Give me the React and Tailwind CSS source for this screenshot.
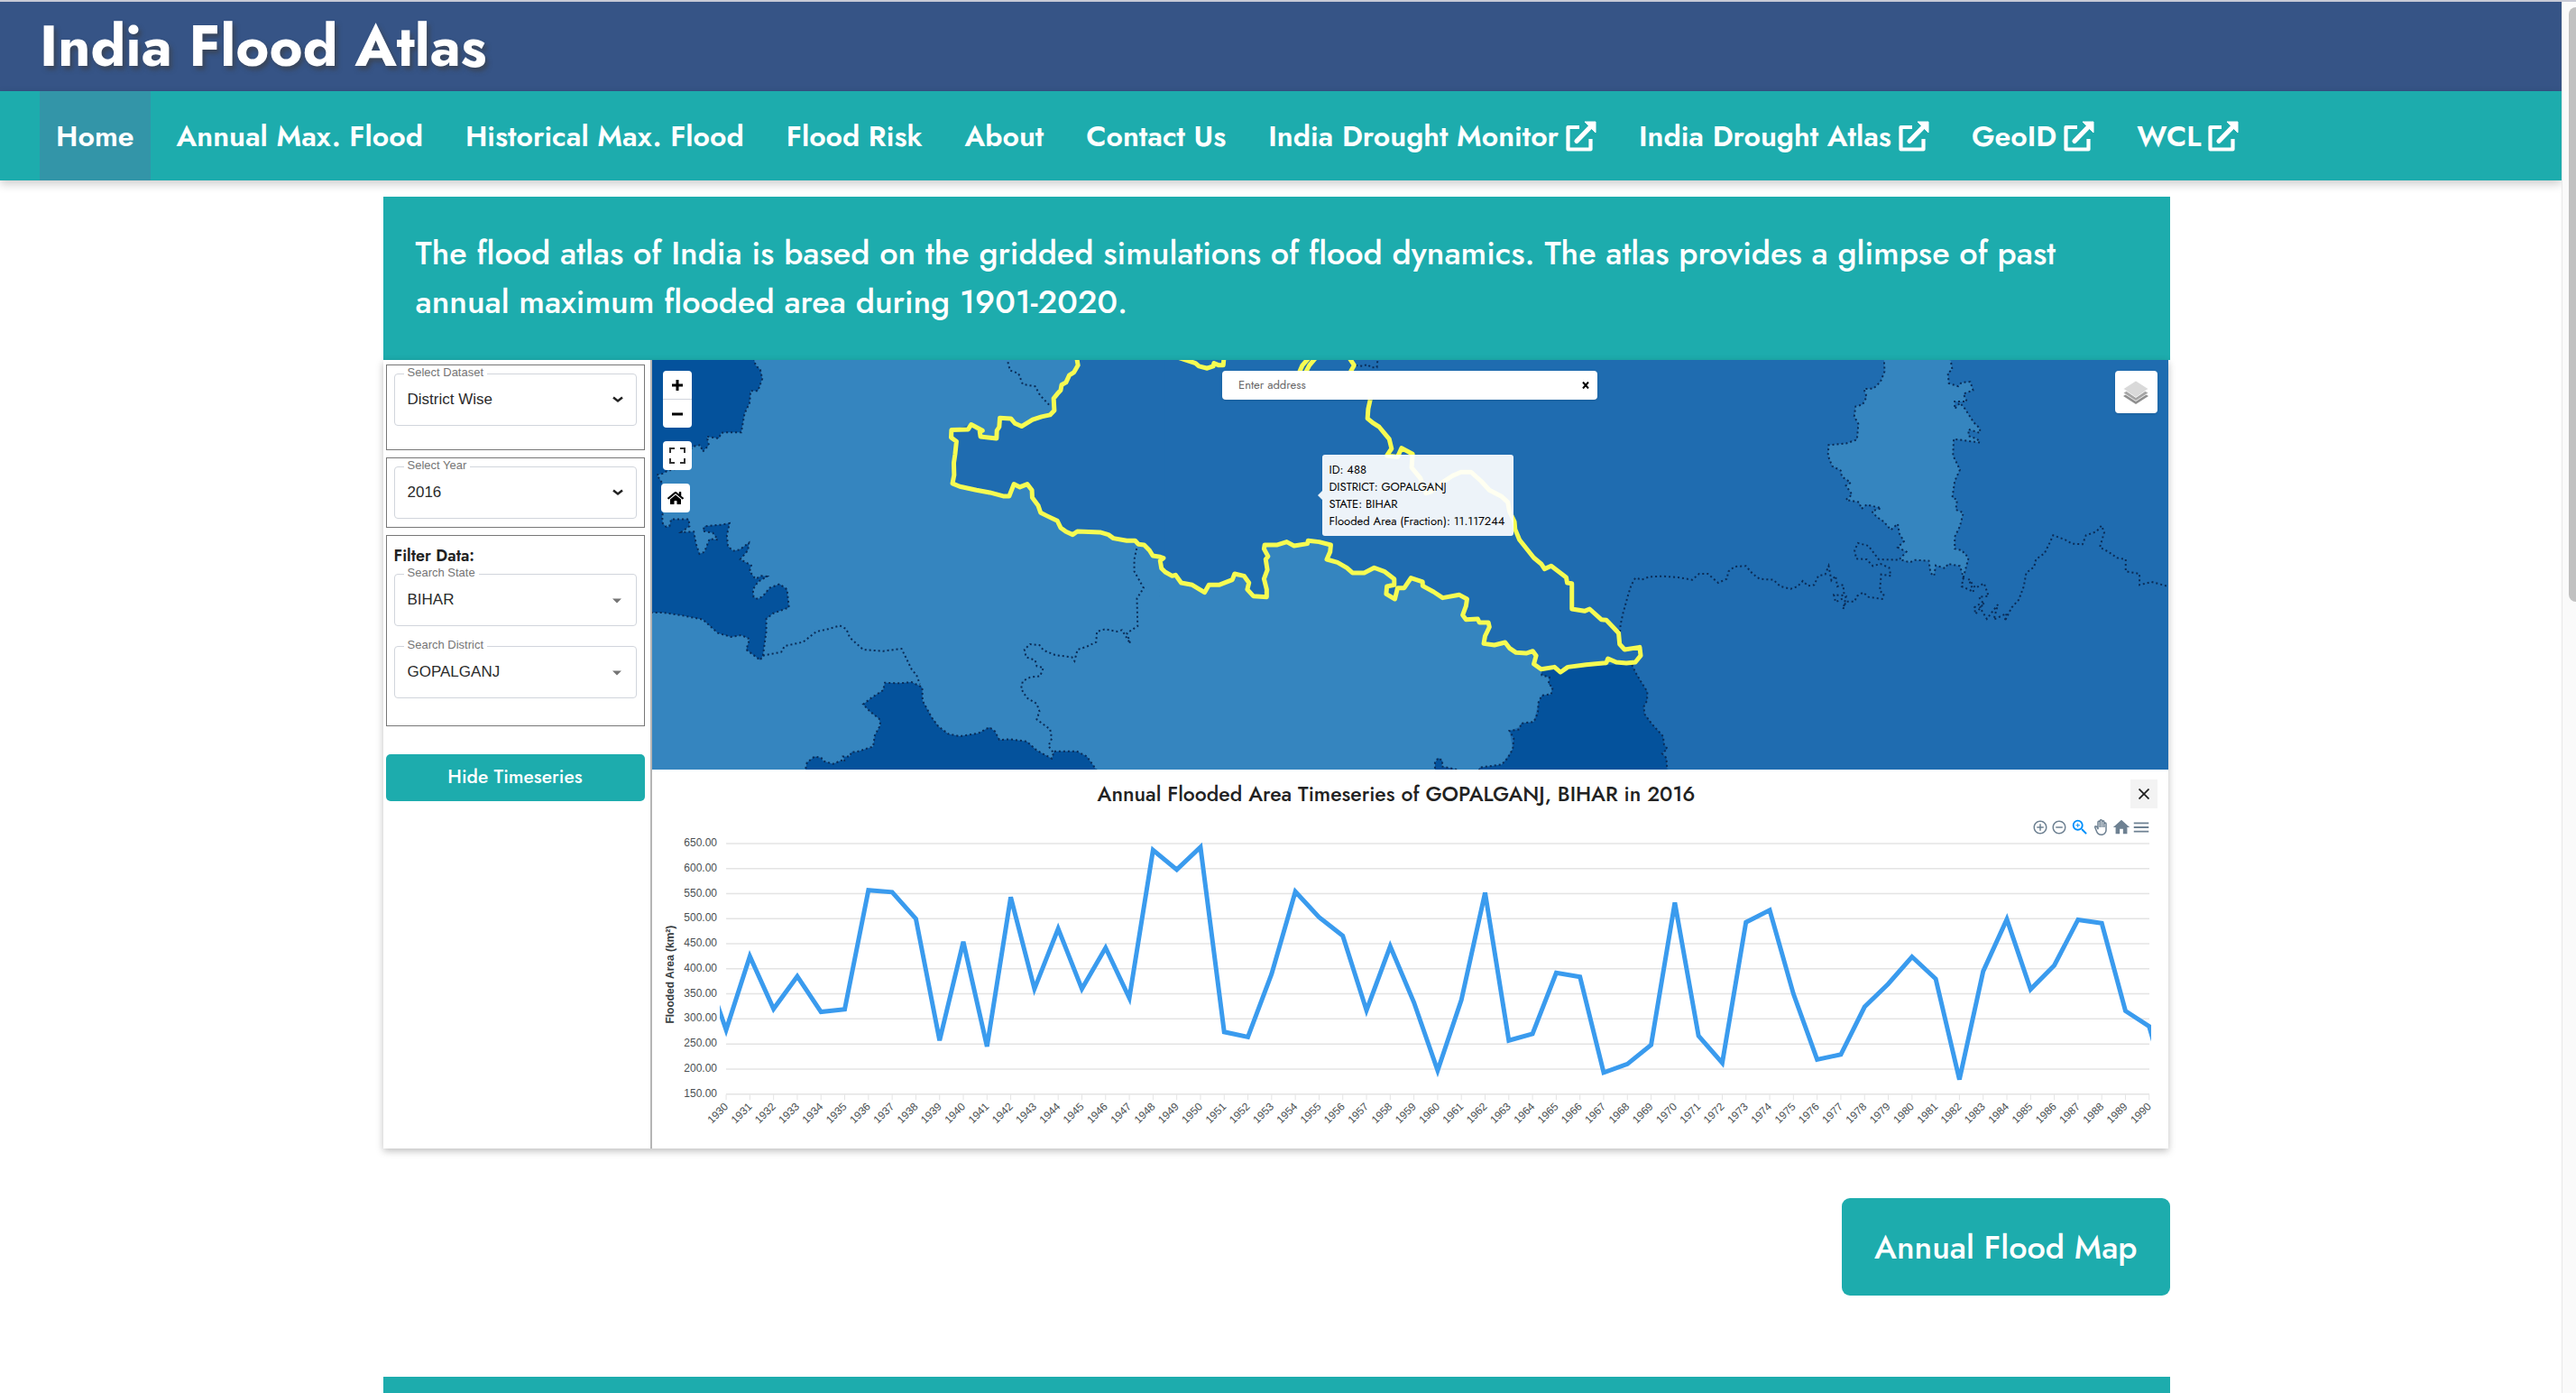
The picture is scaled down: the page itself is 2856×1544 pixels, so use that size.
import { useState } from "react";
import { FaHome } from "react-icons/fa";
import { MdAddCircleOutline, MdRemoveCircleOutline, MdZoomIn, MdOutlineBackHand, MdHome, MdMenu } from "react-icons/md";

const navLinks = [
  { name: "Home", active: true },
  { name: "Annual Max. Flood" },
  { name: "Historical Max. Flood" },
  { name: "Flood Risk" },
  { name: "About" },
  { name: "Contact Us" },
  { name: "India Drought Monitor", external: true },
  { name: "India Drought Atlas", external: true },
  { name: "GeoID", external: true },
  { name: "WCL", external: true },
];

// flooded area (km2) for every year from 1929 to 1991, the first and last are clipped by the plot
const floodedArea = [
  415, 278, 425, 320, 385, 314, 319, 557, 553, 500, 257, 454, 245, 543, 360, 480, 360, 442, 342, 637, 598,
  643, 274, 264, 390, 554, 503, 466, 317, 445, 333, 197, 338, 552, 257, 270, 392, 384, 193, 210, 248,
  532, 266, 212, 493, 517, 350, 219, 229, 324, 370, 424, 380, 179, 395, 499, 359, 407, 498, 491, 316, 285, 120,
];

const years = Array.from({ length: 61 }, (_, i) => 1930 + i);
const ticks = [650, 600, 550, 500, 450, 400, 350, 300, 250, 200, 150];

const ExternalIcon = () => (
  <svg viewBox="0 0 34 34" className="ml-2 size-[34px]" fill="none" stroke="currentColor" strokeWidth="4.200" strokeLinejoin="round" aria-hidden="true">
    <path d="M15 7H2.500V31.500H27.500V20" />
    <path d="M12 22.500L27 7" strokeWidth="5.200" strokeLinecap="round" />
    <path d="M21 1H33V13Z" fill="currentColor" stroke="currentColor" strokeWidth="1" />
  </svg>
);

const Navbar = () => (
  <nav className="flex h-[99px] bg-[#1dacad] px-11 shadow-[0_4px_10px_rgba(0,0,0,0.2)]">
    <ul className="flex gap-[11px]">
      {navLinks.map((link) => (
        <li key={link.name} className="flex">
          <a
            href="#"
            className={`flex items-center px-[18px] text-[32px] font-semibold whitespace-nowrap text-white ${link.active ? "bg-[#3395a8]" : ""}`}
          >
            {link.name}
            {link.external && <ExternalIcon />}
          </a>
        </li>
      ))}
    </ul>
  </nav>
);

const Field = ({ id, label, children }) => (
  <div className="relative h-[58px] rounded border border-gray-300">
    <label htmlFor={id} className="absolute -top-2 left-2.5 bg-white px-1 font-[Liberation_Sans,sans-serif] text-[13px] leading-3 text-[#757575]">
      {label}
    </label>
    {children}
  </div>
);

const SelectField = ({ id, label, value }) => (
  <Field id={id} label={label}>
    <select id={id} className="h-full w-full appearance-none bg-transparent px-3.5 font-[Liberation_Sans,sans-serif] text-[17px] text-[#2b2b2b]">
      <option>{value}</option>
    </select>
    <svg viewBox="0 0 12 8" className="pointer-events-none absolute top-6 right-3.5 h-2 w-3" fill="none" stroke="#222" strokeWidth="2.500" aria-hidden="true">
      <path d="M1 1.500L6 5.500L11 1.500" />
    </svg>
  </Field>
);

const SearchField = ({ id, label, value }) => {
  const [text, setText] = useState(value);
  return (
    <Field id={id} label={label}>
      <input
        id={id}
        value={text}
        onChange={(e) => setText(e.target.value)}
        className="h-full w-full bg-transparent px-3.5 font-[Liberation_Sans,sans-serif] text-[17px] text-[#2b2b2b]"
      />
      <svg viewBox="0 0 10 6" className="pointer-events-none absolute top-[26px] right-4 h-1.5 w-2.5" fill="#757575" aria-hidden="true">
        <path d="M0 0.500H10L5 5.500Z" />
      </svg>
    </Field>
  );
};

const Sidebar = ({ open, onToggle }) => (
  <aside className="w-[298px] shrink-0 border-r-2 border-[#b5b5b5] pt-[5px] pr-1.5 pl-[3px]">
    <div className="h-[95px] border border-[#777] px-2 pt-[9px]">
      <SelectField id="dataset" label="Select Dataset" value="District Wise" />
    </div>
    <div className="mt-2 h-[78px] border border-[#777] px-2 pt-[9px]">
      <SelectField id="year" label="Select Year" value="2016" />
    </div>
    <div className="mt-2 h-[212px] border border-[#777] px-2 pt-2">
      <p className="h-[34px] text-lg font-semibold text-[#222]">Filter Data:</p>
      <div className="flex flex-col gap-[22px]">
        <SearchField id="state" label="Search State" value="BIHAR" />
        <SearchField id="district" label="Search District" value="GOPALGANJ" />
      </div>
    </div>
    <button onClick={onToggle} className="mt-[31px] h-[52px] w-full rounded-[5px] bg-[#1dacad] text-[21px] font-medium text-white">
      {open ? "Hide Timeseries" : "Show Timeseries"}
    </button>
  </aside>
);

const Outline = ({ points, fill = "none" }) => (
  <polyline points={points} fill={fill} stroke="#0a2c57" strokeWidth="2" strokeDasharray="2 3" vectorEffect="non-scaling-stroke" />
);

const Selected = ({ points, fill = "none" }) => (
  <polyline points={points} fill={fill} stroke="#f6fb52" strokeWidth="5" strokeLinejoin="round" vectorEffect="non-scaling-stroke" />
);

const light = "#3585bf";
const mid = "#1f6cb0";
const dark = "#04529c";

// the districts are drawn in three sheets, west to east, each with its own grid
const DistrictMap = () => (
  <svg viewBox="0 0 1680 454" preserveAspectRatio="xMidYMid slice" className="block h-full w-full" role="img" aria-label="District map">
    <rect width="1680" height="454" fill={mid} />
    <g transform="translate(-3 -9) scale(0.37 0.3333)">
      <rect width="1541" height="1400" fill={light} />
      <polygon
        fill={mid}
        points="1280,20 1284,45 1248,102 1211,155 1213,195 1200,210 1115,248 1083,222 1050,220 1040,288 992,282 964,242 905,260 920,298 908,438 980,460 1078,480 1092,440 1132,440 1147,485 1172,535 1222,562 1248,598 1268,608 1282,597 1350,600 1390,620 1455,628 1498,660 1530,695 1534,720 1545,732 1545,20"
      />
      <Outline
        fill={dark}
        points="-10,20 312,20 318,45 332,60 338,90 325,130 303,130 300,170 285,205 275,268 230,268 215,270 208,288 172,282 178,310 160,332 152,310 130,315 80,390 55,395 40,405 22,410 32,425 60,480 38,545 40,570 50,582 60,580 65,557 118,557 120,580 95,600 133,598 140,640 150,672 165,665 180,622 205,625 190,602 160,596 165,580 215,575 240,570 232,610 235,645 250,662 270,658 298,635 295,660 272,690 305,710 300,730 318,755 335,745 352,747 325,765 310,790 312,815 325,822 340,812 360,785 390,772 412,790 418,850 370,870 350,888 350,930 345,970 340,1010 332,1025 290,990 300,955 275,942 245,948 205,935 160,890 100,877 40,867 -10,867"
      />
      <Outline
        fill={dark}
        points="465,1400 472,1365 495,1345 515,1350 520,1360 550,1370 575,1358 585,1362 580,1345 600,1345 605,1330 620,1330 670,1312 675,1275 692,1240 688,1220 660,1195 640,1172 665,1150 700,1125 705,1100 750,1102 785,1098 817,1115 818,1160 838,1200 845,1215 865,1245 895,1270 930,1278 985,1268 1018,1248 1035,1262 1048,1290 1080,1288 1130,1295 1160,1325 1205,1352 1212,1328 1280,1328 1310,1345 1345,1400"
      />
      <Outline points="340,1010 395,998 405,978 460,965 500,930 535,922 570,910 590,922 600,950 640,990 700,995 755,987 785,1055 800,1075 810,1105" />
      <Outline points="1208,1330 1195,1310 1205,1285 1200,1255 1160,1222 1168,1195 1160,1170 1130,1150 1113,1120 1118,1095 1140,1082 1170,1078 1180,1050 1160,1045 1155,1025 1128,1015 1123,990 1140,972 1168,975 1180,992 1215,1008 1265,1015 1273,1028 1282,990 1310,980 1338,965 1340,930 1365,922 1400,930 1415,925 1440,970 1430,935 1462,912 1460,820 1480,785 1452,730 1452,690 1460,650" />
      <Outline points="1070,20 1080,62 1105,72 1118,108 1155,115 1170,145 1200,180" />
    </g>
    <g transform="translate(567 -9) scale(0.37 0.3333)">
      <polygon
        fill={light}
        points="-14,732 25,745 52,768 85,775 122,800 135,775 165,775 205,758 212,738 240,745 255,768 250,790 268,812 308,815 300,755 310,725 312,680 300,655 302,642 340,642 368,632 390,645 430,638 432,628 500,642 488,690 520,700 565,735 600,735 630,718 660,730 690,755 690,775 668,780 666,805 692,822 700,785 720,785 740,752 775,765 808,798 835,818 885,808 908,822 895,875 905,890 972,900 975,915 958,970 990,975 1022,966 1055,1000 1105,995 1115,1010 1108,1038 1130,1055 1155,1090 1162,1135 1122,1165 1108,1230 1035,1260 1045,1320 1012,1372 945,1400 -14,1400"
      />
      <Outline
        fill={dark}
        points="1130,1055 1132,1075 1155,1082 1152,1105 1165,1115 1160,1138 1132,1142 1122,1165 1120,1200 1108,1230 1070,1235 1065,1255 1035,1260 1048,1285 1045,1320 1030,1350 1012,1372 945,1382 945,1400 1508,1400 1505,1350 1492,1335 1508,1320 1498,1305 1495,1278 1460,1235 1440,1205 1437,1180 1447,1160 1448,1130 1428,1095 1412,1065 1400,1036"
      />
      <Outline fill={dark} points="812,1400 812,1365 822,1350 835,1360 832,1378 875,1388 880,1400" />
      <Outline points="1366,930 1368,905 1375,870 1390,810 1400,775 1412,752 1433,757" />
      <Outline points="575,45 595,48 610,42 620,52 638,52 640,30" />
      <Selected points="45,20 95,38 105,48 130,55 148,48 150,38 165,45 178,45 180,20" />
      <Selected points="405,70 415,45 435,20" />
      <Selected points="424,70 436,45 455,20" />
      <Selected points="618,160 625,130 590,100 560,65 570,45 555,20" />
      <Selected points="-261,20 -257,45 -269,68 -283,78 -293,102 -306,110 -309,128 -319,140 -330,155 -328,195 -341,210 -366,216 -393,226 -426,248 -446,238 -458,222 -491,220 -493,250 -500,262 -501,288 -549,282 -551,266 -543,262 -577,242 -586,258 -636,260 -637,285 -621,298 -625,340 -629,370 -628,410 -633,438 -611,448 -561,460 -521,468 -481,480 -463,480 -449,440 -431,450 -409,440 -395,460 -394,485 -376,512 -369,535 -351,545 -319,562 -309,585 -293,598 -273,608 -259,597 -191,600 -166,608 -151,620 -111,628 -86,628 -76,640 -59,642 -43,660 -33,678 -11,682 -1,686 -11,695 -7,720 4,732 25,745 35,742 52,768 85,775 122,800 135,775 165,775 205,758 212,738 240,745 255,768 250,790 268,812 308,815 308,790 300,755 310,725 305,690 312,680 300,655 302,642 340,642 368,632 390,645 430,638 432,628 465,632 500,642 498,665 488,690 520,700 548,718 565,735 600,735 630,718 660,730 690,755 690,775 668,780 666,805 692,822 700,785 720,785 740,752 775,765 775,778 808,798 835,818 885,808 908,822 905,845 895,875 905,890 940,888 945,900 972,900 975,915 962,945 958,970 990,975 1022,966 1035,985 1055,1000 1085,1002 1105,995 1115,1010 1108,1038 1130,1055 1170,1048 1188,1065 1210,1048 1265,1040 1325,1034 1330,1020 1355,1032 1385,1035 1412,1032 1428,1010 1425,982 1380,990 1365,972 1362,935 1345,915 1325,892 1310,890 1275,855 1260,862 1222,855 1222,770 1208,768 1205,750 1160,712 1140,722 1130,705 1108,685 1065,625 1052,590 1050,565 1035,530 1030,500 1010,480 975,460 950,430 920,400 890,400 865,412 840,430 800,465 785,470 768,420 742,385 745,340 712,320 700,350 668,345 682,322 675,290 645,250 628,238 610,222 612,190 618,160" />
    </g>
    <g transform="translate(1097 -9) scale(0.3827 0.3333)">
      <Outline
        fill={light}
        points="700,20 702,65 690,100 670,122 642,124 650,150 638,176 618,182 614,215 626,240 622,292 590,305 540,310 538,345 550,380 575,395 578,415 604,435 590,445 608,475 590,492 628,500 635,522 650,508 692,520 665,530 678,548 700,565 720,592 740,572 745,605 758,630 740,650 765,665 745,690 775,700 790,692 830,695 835,735 845,745 850,710 878,720 885,705 920,712 930,750 945,685 925,660 905,655 905,615 920,580 930,535 908,525 912,492 898,485 905,430 920,392 900,345 902,290 978,302 970,290 945,280 945,258 978,270 978,255 960,235 935,190 920,170 905,190 905,165 940,165 930,140 958,128 950,100 925,102 915,115 888,105 885,70 898,60 892,20"
      />
      <Outline points="0,757 20,748 60,746 105,750 145,758 165,738 190,738 220,768 245,755 250,730 268,714 300,712 320,738 340,755 380,758 400,780 430,788 450,780 465,762 480,778 498,775 510,745 530,740 540,712 548,760 560,745 565,780 582,775 585,810 555,808 560,832 590,815 582,855 590,830 615,830 622,812 640,800 655,815 695,822 700,805 688,795 692,740 720,745 715,718 690,705 668,712 650,690 620,688 615,660 625,636 655,645 685,690 745,692" />
      <Outline points="930,750 925,780 960,798 945,755 965,785 990,770 1003,812 975,815 985,832 962,850 965,872 990,835 978,850 998,888 1030,840 1018,890 1055,870 1050,895 1070,850 1090,825 1105,780 1112,735 1135,715 1140,690 1165,670 1180,635 1190,610 1225,625 1245,638 1275,640 1285,610 1315,598 1330,578 1338,600 1325,650 1350,665 1375,685 1400,690 1400,730 1440,738 1440,775 1475,765 1530,782" />
    </g>
  </svg>
);

const MapPanel = () => (
  <div className="relative h-[454px] overflow-hidden">
    <DistrictMap />
    {/* controls float over the map */}
    <div className="absolute top-3 left-2.5 flex flex-col items-start gap-[15px]">
      <div className="ml-0.5 flex flex-col rounded-sm bg-white">
        <button aria-label="Zoom in" className="flex h-8 w-8 items-center justify-center border-b border-gray-300">
          <svg viewBox="0 0 12 12" className="size-3" stroke="#000" strokeWidth="3"><path d="M6 0V12M0 6H12" /></svg>
        </button>
        <button aria-label="Zoom out" className="flex h-[31px] w-8 items-center justify-center">
          <svg viewBox="0 0 12 12" className="size-3" stroke="#000" strokeWidth="3"><path d="M0 6H12" /></svg>
        </button>
      </div>
      <button aria-label="Full screen" className="ml-0.5 flex size-8 items-center justify-center rounded-sm bg-white">
        <svg viewBox="0 0 18 18" className="size-[18px]" fill="none" stroke="#333" strokeWidth="2"><path d="M1 6V1H6M12 1H17V6M17 12V17H12M6 17H1V12" /></svg>
      </button>
      <button aria-label="Reset view" className="flex size-8 items-center justify-center rounded-sm bg-white">
        <FaHome className="size-[18px] text-black" />
      </button>
    </div>
    <form className="absolute top-3 left-1/2 flex h-8 w-[416px] -translate-x-1/2 items-center rounded-sm bg-white pr-2 pl-[18px] shadow">
      <input aria-label="Address" placeholder="Enter address" className="flex-1 text-[13px] text-gray-700 placeholder:text-[#666]" />
      <button type="reset" aria-label="Clear" className="p-px">
        <svg viewBox="0 0 8 8" className="size-2" stroke="#000" strokeWidth="2"><path d="M1 0.500L7 7.500M7 0.500L1 7.500" /></svg>
      </button>
    </form>
    <button aria-label="Layers" className="absolute top-3 right-3 flex size-[47px] items-center justify-center rounded bg-white shadow">
      <svg viewBox="0 0 28 28" className="size-7">
        <path d="M0 18L14 10L28 18L14 27Z" fill="#8f8f8f" />
        <path d="M0 14.500L14 6L28 14.500L14 23.500Z" fill="#a5a5a5" stroke="#fff" strokeWidth="0.800" />
        <path d="M0 10L14 1L28 10L14 19.500Z" fill="#d9d9d9" stroke="#fff" strokeWidth="0.800" />
      </svg>
    </button>
    <div className="absolute top-[105px] left-[743px] w-[212px] rounded-[3px] bg-white/92 px-2 py-[7px] text-[13px] leading-[19px] whitespace-nowrap text-black">
      <span className="absolute top-10 -left-[5px] h-0 w-0 border-y-[5px] border-r-[5px] border-y-transparent border-r-white/92" />
      <p>ID: 488</p>
      <p>DISTRICT: GOPALGANJ</p>
      <p>STATE: BIHAR</p>
      <p>Flooded Area (Fraction): 11.117244</p>
    </div>
  </div>
);

const plotX = (i) => 82 + i * 26.28;
const plotY = (value) => 8 + (650 - value) * 0.555;

const LineChart = () => (
  <svg viewBox="0 0 1680 346" className="block w-full font-[Liberation_Sans,sans-serif] text-xs" fill="#4a4f52" role="img" aria-label="Flooded area by year">
    <clipPath id="plot">
      <rect x="75" y="0" width="1586" height="300" />
    </clipPath>
    {ticks.map((tick) => (
      <g key={tick}>
        <line x1="82" x2="1659" y1={plotY(tick)} y2={plotY(tick)} stroke="#e4e4e4" strokeWidth="1.500" />
        <text x="72" y={plotY(tick) + 3} textAnchor="end">{tick}.00</text>
      </g>
    ))}
    {years.map((year, i) => (
      <g key={year}>
        <line x1={plotX(i)} x2={plotX(i)} y1="286" y2="292" stroke="#e4e4e4" />
        <text textAnchor="end" transform={`translate(${plotX(i) + 3} 300) rotate(-45)`}>{year}</text>
      </g>
    ))}
    <text textAnchor="middle" transform="translate(24 153) rotate(-90)" className="font-bold" fill="#373d3f">Flooded Area (km²)</text>
    <polyline
      clipPath="url(#plot)"
      points={floodedArea.map((value, i) => `${plotX(i - 1)},${plotY(value)}`).join(" ")}
      fill="none"
      stroke="#3a9bee"
      strokeWidth="5"
    />
  </svg>
);

const Timeseries = ({ onClose }) => (
  <section>
    <div className="flex h-[54px] items-center px-3">
      <h2 className="flex-1 text-center text-[23px] font-medium text-[#222]">Annual Flooded Area Timeseries of GOPALGANJ, BIHAR in 2016</h2>
      <button onClick={onClose} aria-label="Close" className="flex h-8 w-[30px] items-center justify-center bg-[#f3f3f3]">
        <svg viewBox="0 0 12 12" className="size-3" stroke="#222" strokeWidth="1.800"><path d="M0.500 0.500L11.500 11.500M11.500 0.500L0.500 11.500" /></svg>
      </button>
    </div>
    <div className="flex h-5 items-center justify-end gap-[3px] pr-[19px] text-[#6e8192]">
      <button aria-label="Zoom in"><MdAddCircleOutline className="size-[18px]" /></button>
      <button aria-label="Zoom out"><MdRemoveCircleOutline className="size-[18px]" /></button>
      <button aria-label="Selection zoom" className="text-[#008ffb]"><MdZoomIn className="size-[22px]" /></button>
      <button aria-label="Pan"><MdOutlineBackHand className="size-[18px]" /></button>
      <div className="flex">
        <button aria-label="Reset zoom"><MdHome className="size-[22px]" /></button>
        <button aria-label="Menu"><MdMenu className="size-[22px]" /></button>
      </div>
    </div>
    <LineChart />
  </section>
);

export default function App() {
  const [open, setOpen] = useState(true);

  return (
    <div className="flex min-h-screen border-t-2 border-[#c8cad6] bg-white font-[Jost,Lato,sans-serif]">
      <div className="min-w-0 flex-1">
        <header className="flex h-[99px] items-center bg-[#365486] px-11">
          <h1 className="text-[63px] leading-none font-bold text-white [text-shadow:3px_4px_5px_rgba(60,60,60,0.6)]">India Flood Atlas</h1>
        </header>
        <Navbar />
        <main className="pt-[18px] pr-2.5">
          <div className="mx-auto w-[70%]">
            <p className="bg-[#1dacad] px-9 pt-[35px] pb-[38px] text-4xl leading-[54px] font-medium text-white">
              The flood atlas of India is based on the gridded simulations of flood dynamics. The atlas provides a glimpse of past annual maximum flooded area during 1901-2020.
            </p>
            <div className="mr-0.5 flex min-h-[874px] bg-white shadow-[0_3px_8px_rgba(0,0,0,0.25)]">
              <Sidebar open={open} onToggle={() => setOpen(!open)} />
              <div className="min-w-0 flex-1">
                <MapPanel />
                {open && <Timeseries onClose={() => setOpen(false)} />}
              </div>
            </div>
            <div className="mt-[55px] flex justify-end">
              <a href="#" className="flex h-[108px] items-center rounded-[9px] bg-[#1dacad] px-9 text-4xl font-medium text-white">Annual Flood Map</a>
            </div>
            <div className="mt-[90px] h-[18px] bg-[#1dacad]" />
          </div>
        </main>
      </div>
      <div className="w-4 border-l border-[#e8e8e8] bg-[#fafafa] pt-1.5 pl-[7px]">
        <div className="h-[659px] rounded-l-full bg-[#c1c1c1]" />
      </div>
    </div>
  );
}
